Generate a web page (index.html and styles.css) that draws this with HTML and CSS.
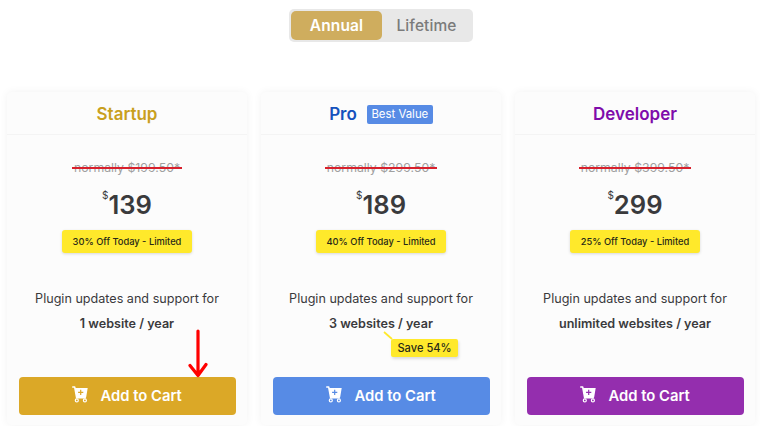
FILE: index.html
```html
<!DOCTYPE html>
<html lang="en">
<head>
<meta charset="utf-8">
<title>Pricing</title>
<link rel="stylesheet" href="styles.css">
</head>
<body>
<svg class="defs" aria-hidden="true">
  <symbol id="cart" viewBox="0 0 16 17">
    <path d="M0.7 1H2.7L4.6 11.7H13.4" fill="none" stroke="currentColor" stroke-width="1.5" stroke-linecap="round" stroke-linejoin="round"/>
    <path fill="currentColor" fill-rule="evenodd" d="M3 2H15.7L14.2 11H4.4ZM8.1 3.8V5.8H6.1V7H8.1V9H9.3V7H11.3V5.8H9.3V3.8Z"/>
    <circle cx="4.8" cy="14.4" r="1.5" fill="none" stroke="currentColor" stroke-width="1.2"/>
    <circle cx="12.9" cy="14.4" r="1.5" fill="none" stroke="currentColor" stroke-width="1.2"/>
  </symbol>
</svg>
<div class="toggle">
  <button class="option active">Annual</button>
  <button class="option">Lifetime</button>
</div>
<main class="plans">
  <section class="card startup">
    <h2 class="head">Startup</h2>
    <p class="was"><span class="strike">normally $199.50*</span></p>
    <p class="price"><span class="currency">$</span>139</p>
    <p class="deal">30% Off Today - Limited</p>
    <p class="desc">Plugin updates and support for<br><strong>1 website / year</strong></p>
    <a class="cta"><svg class="icon"><use href="#cart"/></svg><span>Add to Cart</span></a>
    <svg class="arrow" viewBox="0 0 20 50"><path d="M10 2V46M2 36.5L10 46.5L18 35.5"/></svg>
  </section>
  <section class="card pro">
    <h2 class="head">Pro<span class="best">Best Value</span></h2>
    <p class="was"><span class="strike">normally $299.50*</span></p>
    <p class="price"><span class="currency">$</span>189</p>
    <p class="deal">40% Off Today - Limited</p>
    <p class="desc">Plugin updates and support for<br><strong>3 websites / year</strong></p>
    <a class="cta"><svg class="icon"><use href="#cart"/></svg><span>Add to Cart</span></a>
    <div class="save"><svg class="tail" viewBox="0 0 10 9"><path d="M1 1L9 8"/></svg>Save 54%</div>
  </section>
  <section class="card developer">
    <h2 class="head">Developer</h2>
    <p class="was"><span class="strike">normally $399.50*</span></p>
    <p class="price"><span class="currency">$</span>299</p>
    <p class="deal">25% Off Today - Limited</p>
    <p class="desc">Plugin updates and support for<br><strong>unlimited websites / year</strong></p>
    <a class="cta"><svg class="icon"><use href="#cart"/></svg><span>Add to Cart</span></a>
  </section>
</main>
</body>
</html>
```

FILE: styles.css
```css
* { box-sizing: border-box; }
body {
  margin: 0;
  height: 426px;
  padding-top: 9px;
  overflow: hidden;
  background: #fff;
  color: #3a3a3c;
  font-family: Inter, "Liberation Sans", sans-serif;
}
h2, p { margin: 0; }
.defs { display: none; }
.toggle {
  display: flex;
  width: 184px;
  height: 33px;
  margin-left: 289px;
  padding: 2px;
  border-radius: 5px;
  background: #e8e8e8;
}
.option {
  width: 91px;
  padding: 0;
  border: 0;
  border-radius: 5px;
  background: none;
  color: #7b7b7b;
  font: 500 15.5px/29px Inter, sans-serif;
  letter-spacing: 0.1px;
  white-space: nowrap;
}
.option + .option { width: 89px; }
.option.active { background: #cfad5e; color: #fff; font-weight: 600; }
.plans {
  display: grid;
  grid-template-columns: repeat(3, 240px);
  gap: 14px;
  margin: 50px 0 0 7px;
}
.card {
  position: relative;
  display: flex;
  flex-direction: column;
  align-items: center;
  height: 333px;
  border-radius: 5px;
  background: #fcfcfc;
  box-shadow: 0 0 8px rgba(0, 0, 0, 0.055);
}
.head {
  display: flex;
  align-items: center;
  justify-content: center;
  width: 100%;
  height: 43px;
  padding-top: 2px;
  border-bottom: 1px solid #f4f4f4;
  font-size: 17px;
  font-weight: 600;
}
.startup .head { color: #c9a01e; }
.pro .head { color: #1552bd; }
.developer .head { color: #7f0cab; }
.best {
  margin-left: 10px;
  width: 66px;
  height: 19px;
  border-radius: 2px;
  background: #578be5;
  color: #fff;
  font-size: 11.4px;
  font-weight: 400;
  line-height: 19px;
  text-align: center;
}
.was {
  margin-top: 23px;
  height: 20px;
  color: #a0a0a0;
  font-size: 12.3px;
  line-height: 20px;
}
.strike {
  position: relative;
  display: block;
  padding: 0 2px;
}
.strike::after {
  content: "";
  position: absolute;
  inset: 9px 0 auto;
  height: 2px;
  background: #d8202c;
}
.price {
  display: flex;
  margin-top: 12px;
  height: 29px;
  font-size: 25.6px;
  font-weight: 600;
  line-height: 30px;
}
.currency {
  font-size: 10px;
  font-weight: 400;
  line-height: 10px;
}
.deal {
  width: 130px;
  height: 23px;
  margin-top: 11px;
  border-radius: 3px;
  background: #ffe92b;
  box-shadow: 0 1px 3px rgba(0, 0, 0, 0.15);
  color: #292918;
  font-size: 9.3px;
  font-weight: 500;
  line-height: 23px;
  text-align: center;
}
.desc {
  margin-top: 33px;
  font-size: 12.6px;
  line-height: 25px;
  text-align: center;
}
.desc strong { font-weight: 600; }
.cta {
  display: flex;
  align-items: center;
  width: 217px;
  height: 38px;
  margin-top: 40.5px;
  padding: 1px 0 0 53px;
  border-radius: 4px;
  color: #fff;
  font-size: 14.8px;
  font-weight: 600;
}
.startup .cta { background: #dba827; }
.pro .cta { background: #578be5; }
.developer .cta { background: #942eae; }
.icon { width: 16px; height: 17px; margin: -3px 13px 0 0; }
.arrow {
  position: absolute;
  left: 180.5px;
  top: 237px;
  width: 20px;
  height: 50px;
  fill: none;
  stroke: #f00;
  stroke-width: 3.2;
  stroke-linecap: round;
  stroke-linejoin: round;
}
.save {
  position: absolute;
  left: 130px;
  top: 247px;
  width: 67px;
  height: 18px;
  border-radius: 2px;
  background: #ffe92b;
  box-shadow: 1px 2px 3px rgba(0, 0, 0, 0.13);
  color: #292918;
  font-size: 11.1px;
  font-weight: 500;
  line-height: 18px;
  text-align: center;
}
.tail {
  position: absolute;
  left: -8px;
  top: -8px;
  width: 10px;
  height: 9px;
  fill: none;
  stroke: #ffe92b;
  stroke-width: 1.7;
}
```
